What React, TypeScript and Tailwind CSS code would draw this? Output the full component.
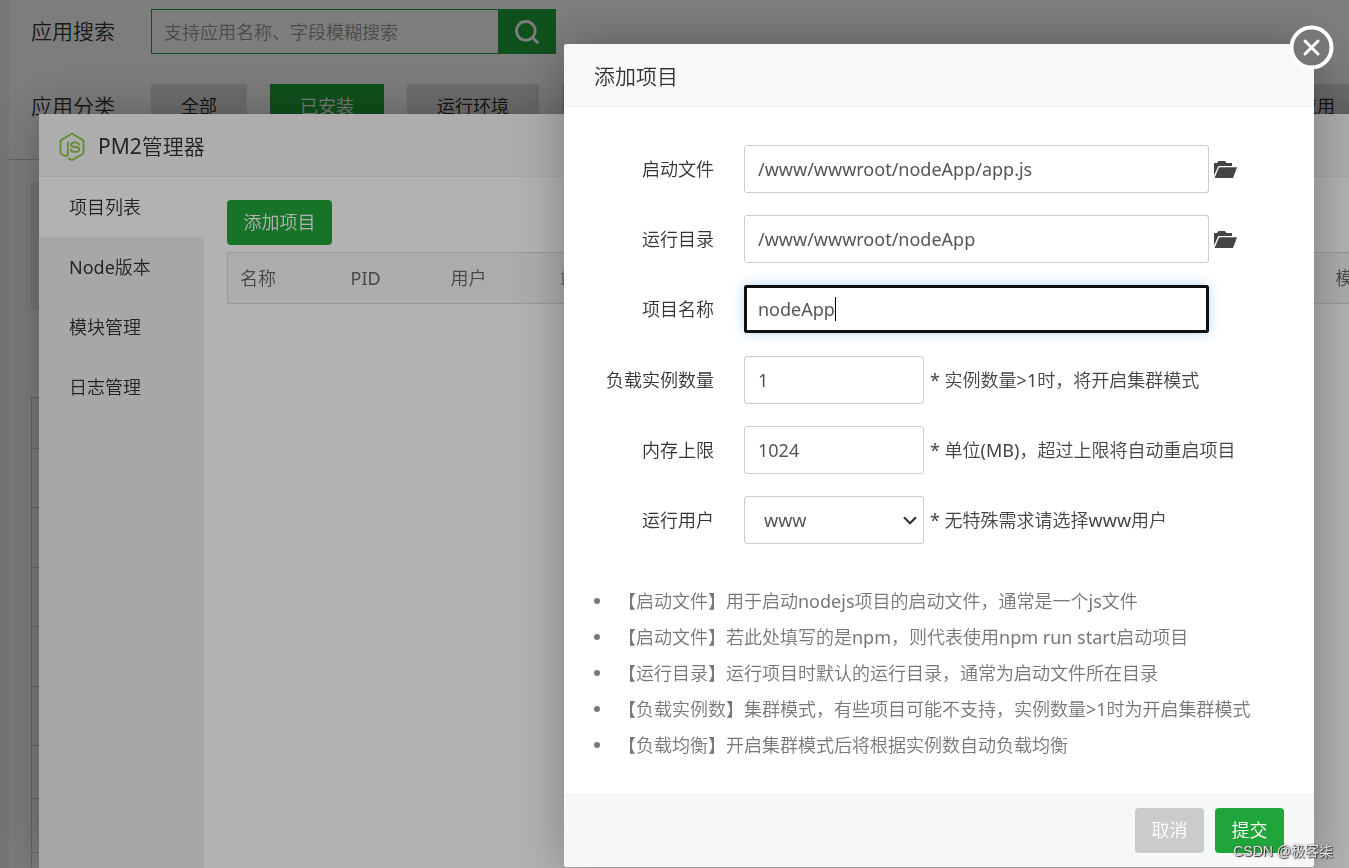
import type { ReactNode } from 'react';
import { Search } from 'lucide-react';
import { SiNodedotjs } from 'react-icons/si';

const categories = [
  { name: '全部', active: false },
  { name: '已安装', active: true },
  { name: '运行环境', active: false },
  { name: '系统工具', active: false },
];

const menu = ['项目列表', 'Node版本', '模块管理', '日志管理'];

const tips = [
  '【启动文件】用于启动nodejs项目的启动文件，通常是一个js文件',
  '【启动文件】若此处填写的是npm，则代表使用npm run start启动项目',
  '【运行目录】运行项目时默认的运行目录，通常为启动文件所在目录',
  '【负载实例数】集群模式，有些项目可能不支持，实例数量>1时为开启集群模式',
  '【负载均衡】开启集群模式后将根据实例数自动负载均衡',
];

const inputClass =
  'h-12 rounded-[3px] border border-[#ccc] bg-white px-[13px] text-[18px] text-[#555] outline-none';

function FolderOpen() {
  return (
    <svg viewBox="0 0 23 17" className="h-[17px] w-[23px] fill-[#444]" aria-hidden="true">
      <path d="M0 2h3.2C3.6.6 4.400 0 5.600 0h4.200c1.200 0 2 .6 2.400 2H18v3H5.200C4.600 5 4.300 5.200 4 5.800L0 14.500z" />
      <path d="M6 6.200h17L19 17H.5L4.800 7c.3-.6.6-.8 1.200-.8z" />
    </svg>
  );
}

function Field({ id, label, children }: { id: string; label: string; children: ReactNode }) {
  return (
    <div className="flex items-center">
      <label htmlFor={id} className="mr-[30px] w-[150px] shrink-0 text-right text-[#333]">
        {label}
      </label>
      {children}
    </div>
  );
}

function StorePage() {
  return (
    <div className="flex h-screen bg-[#f0f0f0]">
      <div className="ml-[9px] min-w-0 flex-1 overflow-hidden bg-white">
        <div className="flex items-center pt-[9px] pl-[22px]">
          <label htmlFor="app-search" className="w-[120px] text-[21px] text-[#333]">
            应用搜索
          </label>
          <input
            id="app-search"
            type="search"
            placeholder="支持应用名称、字段模糊搜索"
            className="h-[45px] w-[347px] border border-r-0 border-[#20a53a] bg-white px-3 text-[18px] outline-none placeholder:text-[#999]"
          />
          <button
            type="button"
            aria-label="搜索"
            className="flex h-[45px] w-[58px] items-center justify-center bg-[#20a53a] text-white"
          >
            <Search className="size-7" strokeWidth={2.4} />
          </button>
        </div>
        <div className="mt-[30px] flex h-[76px] items-start border-b border-[#ccc] pl-[22px]">
          <span className="w-[120px] shrink-0 text-[21px] leading-[45px] text-[#333]">应用分类</span>
          <div className="flex flex-1 gap-[23px]">
            {categories.map((c) => (
              <button
                key={c.name}
                type="button"
                className={
                  c.active
                    ? 'h-[45px] shrink-0 bg-[#20a53a] px-[30px] text-white'
                    : 'h-[45px] shrink-0 bg-[#e1e1e1] px-[30px] text-[#222]'
                }
              >
                {c.name}
              </button>
            ))}
            <button
              type="button"
              className="-mr-4 ml-auto h-[45px] shrink-0 bg-[#e1e1e1] px-[30px] text-[#222]"
            >
              第三方应用
            </button>
          </div>
        </div>
        <div className="px-[22px] pt-[23px]">
          <div className="h-[127px] rounded border border-[#e6e4d6] bg-[#efeee6]" />
          <div className="mt-[87px] border border-[#ccc]">
            <div className="h-[51px] border-b border-[#ccc] bg-[#f6f6f6]" />
            <div className="h-[59px] border-b border-[#ccc]" />
            <div className="h-[60px] border-b border-[#ccc]" />
            <div className="h-[59px] border-b border-[#ccc]" />
            <div className="h-[60px] border-b border-[#ccc]" />
            <div className="h-[59px] border-b border-[#ccc]" />
            <div className="h-[53px] border-b border-[#ccc]" />
            <div className="h-[54px] border-b border-[#ccc]" />
            <div className="h-[54px]" />
          </div>
        </div>
      </div>
    </div>
  );
}

function ManagerWindow() {
  return (
    <div className="fixed inset-0 flex overflow-hidden bg-black/30 pt-[114px] pl-[39px]">
      <section className="-mr-20 flex flex-1 flex-col bg-white shadow-[1px_1px_50px_rgba(0,0,0,0.3)]">
        <header className="flex h-[63px] shrink-0 items-center gap-3 border-b border-[#eee] bg-[#f8f8f8] pt-[3px] pl-[19px]">
          <SiNodedotjs className="size-7 text-[#8cc84b]" />
          <h1 className="text-[21px] text-[#333]">PM2管理器</h1>
        </header>
        <div className="flex flex-1">
          <nav className="w-[165px] bg-[#f0f0f0]">
            {menu.map((item, i) => (
              <a
                key={item}
                href="#"
                className={
                  i === 0
                    ? 'block h-[60px] bg-white pl-[30px] leading-[60px] text-[#333]'
                    : 'block h-[60px] pl-[30px] leading-[60px] text-[#333]'
                }
              >
                {item}
              </a>
            ))}
          </nav>
          <div className="flex-1 pt-[23px] pl-[23px]">
            <button type="button" className="h-[45px] w-[105px] rounded bg-[#20a53a] text-white">
              添加项目
            </button>
            <table className="mt-[7px] w-full table-fixed border-collapse text-left text-[#666]">
              <thead>
                <tr className="h-[51px] border border-[#ddd] bg-[#f6f6f6]">
                  <th className="w-[111px] pl-3 font-normal">名称</th>
                  <th className="w-[100px] pl-3 font-normal">PID</th>
                  <th className="w-[110px] pl-3 font-normal">用户</th>
                  <th className="pl-3 font-normal">端口</th>
                  <th className="w-[105px] pl-3 font-normal">模式</th>
                </tr>
              </thead>
            </table>
          </div>
        </div>
      </section>
    </div>
  );
}

function AddProjectDialog() {
  return (
    <div className="fixed inset-0 flex items-start justify-end overflow-hidden bg-black/30 pt-11 pr-[35px]">
      <form
        role="dialog"
        aria-labelledby="dialog-title"
        className="relative w-[750px] rounded-[3px] bg-white shadow-[1px_1px_50px_rgba(0,0,0,0.3)]"
      >
        <header className="flex h-[63px] items-center rounded-t-[3px] border-b border-[#eee] bg-[#f8f8f8] pt-[3px] pl-[30px]">
          <h2 id="dialog-title" className="text-[21px] text-[#333]">
            添加项目
          </h2>
        </header>
        <button type="button" aria-label="关闭" className="absolute -top-5 -right-5">
          <svg viewBox="0 0 46 46" className="size-[46px]" fill="none" stroke="#fff" aria-hidden="true">
            <circle cx="23.500" cy="23.500" r="20" fill="#777" strokeWidth="4" />
            <path d="M17 17l13 13M30 17l-13 13" strokeWidth="3" strokeLinecap="round" />
          </svg>
        </button>
        <div className="pt-[38px]">
          <div className="flex flex-col gap-[22px]">
            <Field id="entry" label="启动文件">
              <input id="entry" defaultValue="/www/wwwroot/nodeApp/app.js" className={`${inputClass} w-[465px]`} />
              <button type="button" aria-label="选择启动文件" className="ml-[5px]">
                <FolderOpen />
              </button>
            </Field>
            <Field id="cwd" label="运行目录">
              <input id="cwd" defaultValue="/www/wwwroot/nodeApp" className={`${inputClass} w-[465px]`} />
              <button type="button" aria-label="选择运行目录" className="ml-[5px]">
                <FolderOpen />
              </button>
            </Field>
            <Field id="name" label="项目名称">
              <div className="relative">
                <input
                  id="name"
                  defaultValue="nodeApp"
                  className="h-12 w-[465px] rounded-[3px] border border-[#101010] bg-white px-[13px] text-[18px] text-[#555] shadow-[0_0_12px_rgba(102,175,233,0.5)] outline-3 -outline-offset-3 outline-[#101010]"
                />
                <div className="pointer-events-none absolute inset-y-0 left-[14px] flex items-center" aria-hidden="true">
                  <span className="invisible">nodeApp</span>
                  <span className="h-6 w-px bg-black" />
                </div>
              </div>
            </Field>
          </div>
          <div className="mt-[23px] flex flex-col gap-[22px]">
            <Field id="instances" label="负载实例数量">
              <input id="instances" defaultValue="1" className={`${inputClass} w-[180px]`} />
              <span className="ml-[6px] text-[#444]">* 实例数量&gt;1时，将开启集群模式</span>
            </Field>
            <Field id="memory" label="内存上限">
              <input id="memory" defaultValue="1024" className={`${inputClass} w-[180px]`} />
              <span className="ml-[6px] text-[#444]">* 单位(MB)，超过上限将自动重启项目</span>
            </Field>
            <Field id="user" label="运行用户">
              <div className="grid w-[180px] items-center">
                <select
                  id="user"
                  className="col-start-1 row-start-1 h-12 appearance-none rounded-[3px] border border-[#ccc] bg-white pl-[19px] text-[18px] text-[#555] outline-none"
                >
                  <option>www</option>
                </select>
                <svg
                  viewBox="0 0 14 9"
                  className="pointer-events-none col-start-1 row-start-1 mr-[7px] h-[9px] w-[14px] justify-self-end"
                  fill="none"
                  stroke="#333"
                  strokeWidth="2.2"
                  aria-hidden="true"
                >
                  <path d="M1 1.200l6 6 6-6" />
                </svg>
              </div>
              <span className="ml-[6px] text-[#444]">* 无特殊需求请选择www用户</span>
            </Field>
          </div>
          <ul className="mt-[39px] pl-[30px] leading-9 text-[#777]">
            {tips.map((tip) => (
              <li key={tip} className="flex items-center gap-[18px]">
                <span className="size-[6px] shrink-0 rounded-full bg-[#777]" />
                {tip}
              </li>
            ))}
          </ul>
        </div>
        <footer className="mt-[31px] flex h-[73px] items-start justify-end gap-[11px] rounded-b-[3px] border-t border-[#edf1f1] bg-[#f5f8f7] pt-[13px] pr-[30px]">
          <button type="button" className="h-[45px] w-[69px] rounded bg-[#cbcbcb] text-white">
            取消
          </button>
          <button type="button" className="h-[45px] w-[69px] rounded bg-[#20a53a] text-white">
            提交
          </button>
        </footer>
      </form>
    </div>
  );
}

export default function App() {
  return (
    <div className="min-h-screen font-['Noto_Sans','Noto_Sans_CJK_SC_DemiLight','Noto_Sans_CJK_SC',sans-serif] text-[18px]">
      <StorePage />
      <ManagerWindow />
      <AddProjectDialog />
      <p className="pointer-events-none fixed right-4 bottom-[7px] font-['Liberation_Sans','Noto_Sans_CJK_SC',sans-serif] text-[14px] leading-5 text-[#e4e4e4] [text-shadow:1px_1px_1px_#333,0_0_2px_#555]">
        CSDN @极客柒
      </p>
    </div>
  );
}
